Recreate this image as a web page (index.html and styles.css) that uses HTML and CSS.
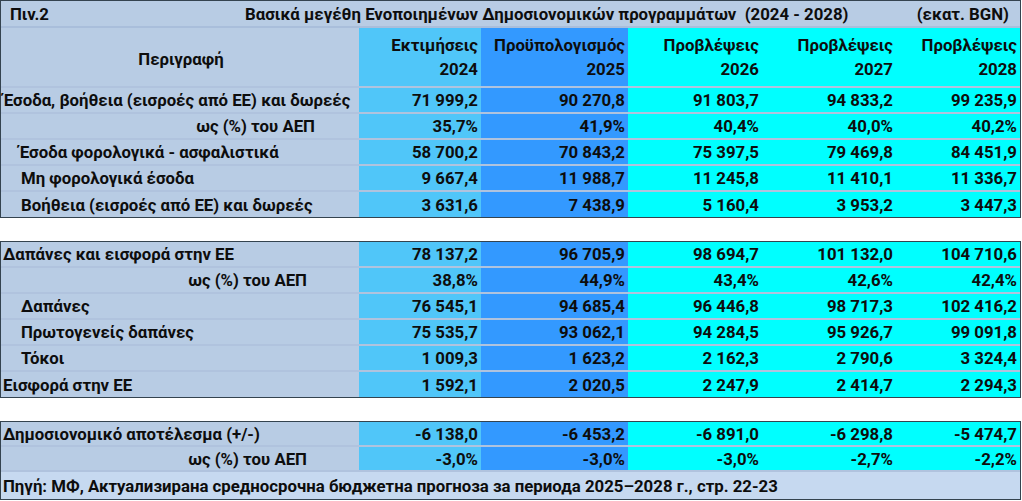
FILE: index.html
```html
<!DOCTYPE html>
<html lang="el">
<head>
<meta charset="utf-8">
<title>Πιν.2</title>
<link rel="stylesheet" href="styles.css">
</head>
<body>
<div class="sheet">
  <div class="block block-top">
    <div class="title-row">
      <span class="t-no">Πιν.2</span>
      <span class="t-main">Βασικά μεγέθη Ενοποιημένων Δημοσιονομικών προγραμμάτων  (2024 - 2028)</span>
      <span class="t-unit">(εκατ. BGN)</span>
    </div>
    <div class="row head">
      <div class="desc center">Περιγραφή</div>
      <div class="num c24">Εκτιμήσεις<br>2024</div>
      <div class="num c25">Προϋπολογισμός<br>2025</div>
      <div class="num cf">Προβλέψεις<br>2026</div>
      <div class="num cf">Προβλέψεις<br>2027</div>
      <div class="num cf">Προβλέψεις<br>2028</div>
    </div>
    <div class="row">
      <div class="desc">Έσοδα, βοήθεια (εισροές από ΕΕ) και δωρεές</div>
      <div class="num c24">71 999,2</div><div class="num c25">90 270,8</div>
      <div class="num cf">91 803,7</div><div class="num cf">94 833,2</div><div class="num cf">99 235,9</div>
    </div>
    <div class="row">
      <div class="desc pct pct-a">ως (%) του ΑΕΠ</div>
      <div class="num c24">35,7%</div><div class="num c25">41,9%</div>
      <div class="num cf">40,4%</div><div class="num cf">40,0%</div><div class="num cf">40,2%</div>
    </div>
    <div class="row">
      <div class="desc sub sub-a">Έσοδα φορολογικά - ασφαλιστικά</div>
      <div class="num c24">58 700,2</div><div class="num c25">70 843,2</div>
      <div class="num cf">75 397,5</div><div class="num cf">79 469,8</div><div class="num cf">84 451,9</div>
    </div>
    <div class="row">
      <div class="desc sub">Μη φορολογικά έσοδα</div>
      <div class="num c24">9 667,4</div><div class="num c25">11 988,7</div>
      <div class="num cf">11 245,8</div><div class="num cf">11 410,1</div><div class="num cf">11 336,7</div>
    </div>
    <div class="row">
      <div class="desc sub">Βοήθεια (εισροές από ΕΕ) και δωρεές</div>
      <div class="num c24">3 631,6</div><div class="num c25">7 438,9</div>
      <div class="num cf">5 160,4</div><div class="num cf">3 953,2</div><div class="num cf">3 447,3</div>
    </div>
  </div>

  <div class="block">
    <div class="row">
      <div class="desc">Δαπάνες και εισφορά στην ΕΕ</div>
      <div class="num c24">78 137,2</div><div class="num c25">96 705,9</div>
      <div class="num cf">98 694,7</div><div class="num cf">101 132,0</div><div class="num cf">104 710,6</div>
    </div>
    <div class="row">
      <div class="desc pct">ως (%) του ΑΕΠ</div>
      <div class="num c24">38,8%</div><div class="num c25">44,9%</div>
      <div class="num cf">43,4%</div><div class="num cf">42,6%</div><div class="num cf">42,4%</div>
    </div>
    <div class="row">
      <div class="desc sub">Δαπάνες</div>
      <div class="num c24">76 545,1</div><div class="num c25">94 685,4</div>
      <div class="num cf">96 446,8</div><div class="num cf">98 717,3</div><div class="num cf">102 416,2</div>
    </div>
    <div class="row">
      <div class="desc sub">Πρωτογενείς δαπάνες</div>
      <div class="num c24">75 535,7</div><div class="num c25">93 062,1</div>
      <div class="num cf">94 284,5</div><div class="num cf">95 926,7</div><div class="num cf">99 091,8</div>
    </div>
    <div class="row">
      <div class="desc sub">Τόκοι</div>
      <div class="num c24">1 009,3</div><div class="num c25">1 623,2</div>
      <div class="num cf">2 162,3</div><div class="num cf">2 790,6</div><div class="num cf">3 324,4</div>
    </div>
    <div class="row">
      <div class="desc">Εισφορά στην ΕΕ</div>
      <div class="num c24">1 592,1</div><div class="num c25">2 020,5</div>
      <div class="num cf">2 247,9</div><div class="num cf">2 414,7</div><div class="num cf">2 294,3</div>
    </div>
  </div>

  <div class="block block-end">
    <div class="row">
      <div class="desc">Δημοσιονομικό αποτέλεσμα (+/-)</div>
      <div class="num c24">-6 138,0</div><div class="num c25">-6 453,2</div>
      <div class="num cf">-6 891,0</div><div class="num cf">-6 298,8</div><div class="num cf">-5 474,7</div>
    </div>
    <div class="row">
      <div class="desc pct">ως (%) του ΑΕΠ</div>
      <div class="num c24">-3,0%</div><div class="num c25">-3,0%</div>
      <div class="num cf">-3,0%</div><div class="num cf">-2,7%</div><div class="num cf">-2,2%</div>
    </div>
    <div class="source">Πηγή: МФ, Актуализирана средносрочна бюджетна прогноза за периода 2025–2028 г., стр. 22-23</div>
  </div>
</div>
</body>
</html>
```

FILE: styles.css
```css
* { box-sizing: border-box; }

html, body {
  margin: 0;
  padding: 0;
  background: #ffffff;
}

.sheet {
  width: 1021px;
  font-family: Roboto, "Liberation Sans", sans-serif;
  font-weight: 700;
  font-size: 16.8px;
  color: #0d0d0d;
}

.block {
  border: 1px solid #34434f;
  margin-top: 23px;
}

.block-top {
  margin-top: 0;
}

.title-row {
  display: grid;
  grid-template-columns: 235px 1fr auto;
  align-items: center;
  height: 27px;
  padding: 0 11px 0 9px;
  background: #b8cce4;
  border-bottom: 2px solid #a9bedb;
  white-space: pre;
}

.row {
  display: grid;
  grid-template-columns: 358px 122px 147px 134px 134px 124px;
  height: 26px;
  border-bottom: 2px solid #b0c3de;
}

.row:last-child {
  height: 25px;
  border-bottom: none;
}

.block-end .row {
  height: 25px;
}

.row.head {
  height: 60px;
}

.row > div {
  display: flex;
  align-items: center;
  white-space: nowrap;
}

.desc {
  background: #b8cce4;
  padding-left: 2px;
}

.desc.center {
  justify-content: center;
  padding-top: 3px;
}

.desc.sub {
  padding-left: 20px;
}

.desc.sub-a {
  padding-left: 18px;
}

.desc.pct {
  justify-content: flex-end;
  padding-right: 52px;
}

.desc.pct-a {
  padding-right: 44px;
}

.num {
  justify-content: flex-end;
  text-align: right;
  padding-right: 3px;
}

.head .num {
  align-items: flex-start;
  line-height: 24px;
  padding-top: 5px;
}

.c24 { background: #50c6f9; }
.c25 { background: #3399ff; }
.cf  { background: #00ffff; }

.source {
  height: 27px;
  display: flex;
  align-items: center;
  padding-left: 2px;
  background: #c6d9f0;
  white-space: nowrap;
}
```
